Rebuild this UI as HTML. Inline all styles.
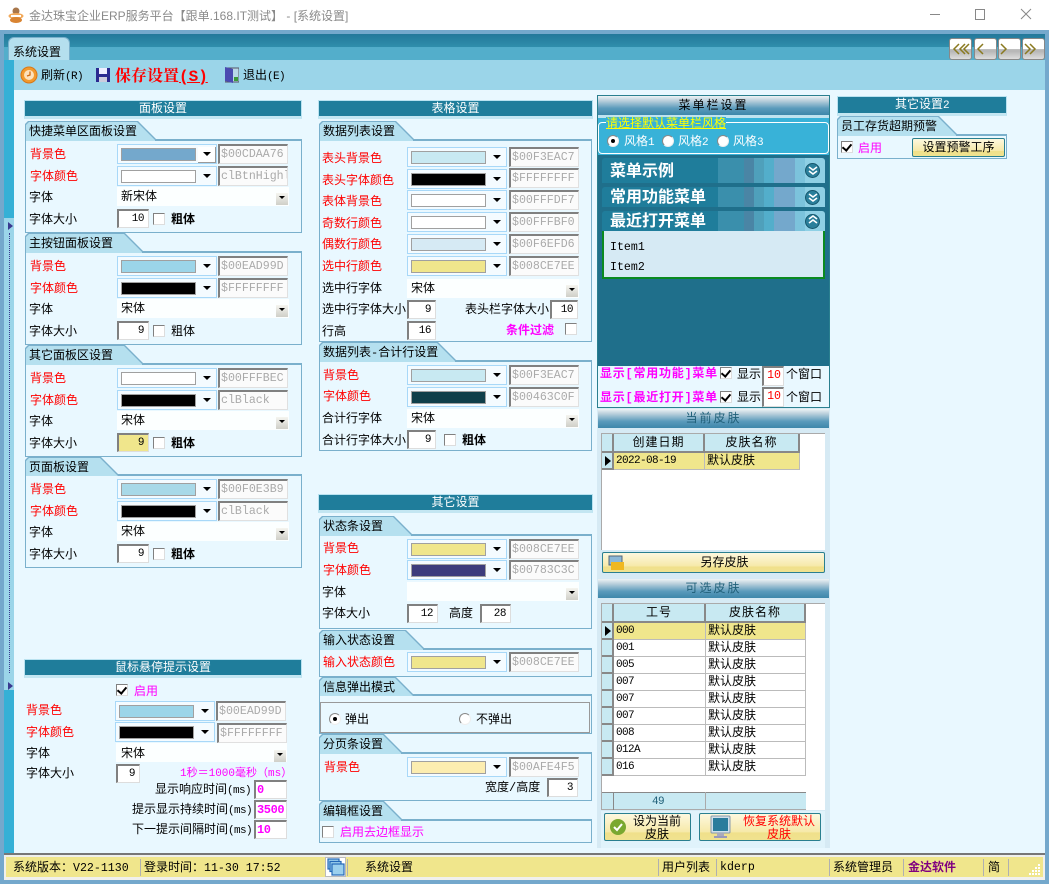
<!DOCTYPE html>
<html><head><meta charset="utf-8"><title>金达珠宝企业ERP服务平台</title>
<style>
html,body{margin:0;padding:0}
body{width:1049px;height:884px;overflow:hidden;position:relative;background:#e9f8ff;font:12px/14px "Liberation Mono","WenQuanYi Zen Hei","Noto Sans CJK SC",monospace;color:#000}
div,span,i,b{position:absolute;box-sizing:border-box}
.t{white-space:nowrap;font-style:normal;font-weight:normal;margin-top:1px}
.t.a{font-size:11px;letter-spacing:-.6px}
.t.bd{font-weight:bold}
.x{position:static;font-size:11px;letter-spacing:-.6px}
.y{position:static;font-size:11.6px}
.r{color:#f00}.m{color:#f0f}.bd{font-weight:bold}
.w{left:0;width:0;height:0}
.h{height:19px;background:#1f7d9b;border:1px solid #b9e2f0;border-bottom:3px solid #c3e6f2;color:#fff;text-align:center;line-height:17px}
.tab{height:20px;z-index:1;background:#7ab0cc;clip-path:polygon(0 3px,3px 0,calc(100% - 18px) 0,100% 18px,100% 100%,0 100%)}
.tab::before{content:"";position:absolute;left:1px;top:1px;right:1px;bottom:0;background:#b5e0ef;clip-path:polygon(0 3px,3px 0,calc(100% - 18px) 0,100% 18px,100% 100%,0 100%)}
.tab span{left:4px;top:4px;white-space:nowrap}
.g{border:1px solid #7ab0cc;border-top:2px solid #7ab0cc}
.c{width:100px;height:20px;border:1px solid #a8d8f8;background:#f4fbff}
.c i{left:3px;top:3px;width:75px;height:13px;border:1px solid #a0a0a0}
.c b{left:85px;top:7px;width:0;height:0;border-left:4px solid transparent;border-right:4px solid transparent;border-top:4px solid #000}
.c u{position:absolute;left:80px;top:2px;width:17px;height:15px;border-right:1px solid #999;border-bottom:1px solid #999;background:#fff}
.e{width:70px;height:20px;border:1px solid #e0e0e0;border-top:2px solid #808080;border-left:2px solid #808080;background:#fbfbfb;color:#aaa;font-size:11.6px;line-height:17px;padding-left:1px;white-space:nowrap;overflow:hidden}
.s{height:19px;border:1px solid #ddd;border-top:2px solid #808080;border-left:2px solid #808080;background:#fff;text-align:right;padding-right:4px;line-height:16px;font-size:11px;letter-spacing:-.5px}
.k{width:12px;height:12px;border:1px solid #ddd;border-top:1px solid #808080;border-left:1px solid #808080;background:#fff}
.k.on::after{content:"";position:absolute;left:2px;top:0;width:4px;height:7px;border-right:2px solid #000;border-bottom:2px solid #000;transform:rotate(40deg)}
.sel{height:19px;background:#fcffff}
.ab{width:12px;height:12px;background:linear-gradient(#f5f5f0,#cfcfc8)}
.ab::after{content:"";position:absolute;left:3px;top:3px;border-left:3px solid transparent;border-right:3px solid transparent;border-top:3px solid #000}
.gh{height:19px;background:linear-gradient(#eef3f5,#b9cfdc 25%,#5a9abb 65%,#3e87aa);text-align:center;line-height:20px;color:#1f5f78;letter-spacing:2px}
.rd{width:12px;height:12px;border-radius:50%;background:#fff;border:1px solid #888;border-right-color:#eee;border-bottom-color:#eee}
.rd.on::after{content:"";position:absolute;left:3px;top:3px;width:4px;height:4px;border-radius:50%;background:#000}
.bar{left:602px;width:223px;background:linear-gradient(90deg,#1f7d9b 0,#1f7d9b 116px,#3a8fac 116px,#3a8fac 142px,#4a85a5 142px,#4a85a5 152px,#4fa0bb 152px,#4fa0bb 162px,#53aecb 162px,#53aecb 172px,#74a8cc 172px,#74a8cc 193px,#7cc3dc 193px,#7cc3dc 203px,#8fd0e5 203px);border-radius:3px 3px 0 0;color:#fff;font-size:16px;font-weight:bold;padding-left:8px;white-space:nowrap}
.o{left:203px;width:15px;height:15px;border-radius:50%;background:#2a7f9b;border:1px solid #15566c}
.btn{background:linear-gradient(#fdf8df,#f6e9a8 70%,#f0e08a 71%,#f0e28f);border:1px solid #2a7f8f;border-radius:2px;text-align:center}
.cell{height:17px;border-right:1px solid #bbb;border-bottom:1px solid #bbb;white-space:nowrap;padding-left:2px;line-height:16px}
.num{font-size:11px;letter-spacing:-.6px}
.hc{background:#c8e9f2;border-right:2px solid #888;border-bottom:2px solid #888;text-align:center;height:19px;line-height:18px;letter-spacing:1px}
.sp{top:859px;width:1px;height:17px;background:#b0b0b0}
.n{top:38px;width:23px;height:22px;border:1px solid #888;border-radius:3px;background:linear-gradient(#fff 50%,#c2c2c2 50%,#b5b5b5 60%,#ddd)}
</style></head><body>
<!-- title bar -->
<div style="left:0;top:0;width:1049px;height:30px;background:#fff"></div>
<svg style="position:absolute;left:7px;top:7px" width="18" height="17"><ellipse cx="9" cy="4" rx="3.500" ry="3.500" fill="#a8764a"/><ellipse cx="9" cy="9" rx="7.500" ry="3" fill="#f2aa5c"/><ellipse cx="9" cy="13" rx="6" ry="3" fill="#d98432"/><rect x="4" y="8" width="10" height="2" fill="#fff"/></svg>
<span class="t" style="left:29px;top:8px;color:#8a8a8a;font-family:'Liberation Sans','Noto Sans CJK SC',sans-serif">金达珠宝企业ERP服务平台【跟单.168.IT测试】 - [系统设置]</span>
<svg style="position:absolute;left:925px;top:5px" width="115" height="20" fill="none" stroke="#888" stroke-width="1"><path d="M5 9.5h10M50.5 4.5h9v10h-9zM96 4l10 10M106 4l-10 10"/></svg>
<!-- frame -->
<div style="left:0;top:30px;width:4px;height:854px;background:#74a8cc"></div>
<div style="left:1045px;top:30px;width:4px;height:854px;background:#74a8cc"></div>
<div style="left:0;top:880px;width:1049px;height:4px;background:#74a8cc"></div>
<div style="left:0;top:30px;width:1049px;height:4px;background:#74a8cc"></div>
<div style="left:4px;top:34px;width:1041px;height:26px;background:linear-gradient(#23789a,#2f8eac 50%,#53aecb 51%,#53aecb)"></div>
<div style="left:8px;top:37px;width:62px;height:24px;background:#b5dfee;border:1px solid #7ab0cc;border-bottom:0;border-radius:6px 6px 0 0"></div>
<span class="t" style="left:13px;top:45px">系统设置</span>
<div class="n" style="left:949px"></div><div class="n" style="left:974px"></div><div class="n" style="left:998px"></div><div class="n" style="left:1022px"></div>
<svg style="position:absolute;left:949px;top:38px" width="96" height="22" fill="none" stroke="#8a7a20" stroke-width="1.5"><path d="M10 6l-5 5 5 5M16 6l-5 5 5 5M20 6l-5 5 5 5M34 6l-5 5 5 5M52 6l5 5-5 5M76 6l5 5-5 5M81 6l5 5-5 5"/></svg>
<!-- rail & toolbar -->
<div style="left:4px;top:60px;width:10px;height:793px;background:#35b0d6"></div>
<div style="left:4px;top:218px;width:10px;height:472px;background:#9bd5e9"></div>
<div style="left:8px;top:222px;border-left:5px solid #3a3a90;border-top:4px solid transparent;border-bottom:4px solid transparent"></div>
<div style="left:8px;top:682px;border-left:5px solid #3a3a90;border-top:4px solid transparent;border-bottom:4px solid transparent"></div>
<div style="left:9px;top:233px;height:440px;border-left:1px dotted #3a3a90"></div>
<div style="left:14px;top:60px;width:1031px;height:30px;background:#9bd5e9"></div>
<svg style="position:absolute;left:20px;top:66px" width="18" height="18"><circle cx="9" cy="9" r="8" fill="#f29a2e" stroke="#d87818"/><circle cx="9" cy="9" r="5" fill="#fde2bc"/><path d="M10 5.500v3.500l-3 1" stroke="#d06a10" stroke-width="1.300" fill="none"/></svg>
<span class="t" style="left:41px;top:68px">刷新<span class="x">(R)</span></span>
<svg style="position:absolute;left:96px;top:68px" width="14" height="14"><rect width="14" height="14" fill="#2a2a90"/><rect x="3" y="0" width="8" height="6" fill="#eef"/><rect x="3" y="9" width="8" height="5" fill="#ccd"/></svg>
<span class="t r bd" style="left:115px;top:67px;font-size:16px;line-height:18px;font-family:'Liberation Mono','Noto Serif CJK SC',serif">保存设置<span style="position:static;text-decoration:underline">(S)</span></span>
<svg style="position:absolute;left:225px;top:67px" width="14" height="16"><rect x="0" y="1" width="14" height="14" fill="#b8d8e8" stroke="#556"/><path d="M0 0l8 2v14l-8-2z" fill="#4a4ab0"/><rect x="9" y="10" width="4" height="4" fill="#3a9a3a"/></svg>
<span class="t" style="left:243px;top:68px">退出<span class="x">(E)</span></span>

<!-- COLUMN 1 -->
<div class="h" style="left:24px;top:100px;width:278px">面板设置</div>
<div class="tab" style="left:25px;top:121px;width:131px"><span>快捷菜单区面板设置</span></div>
<div class="g" style="left:25px;top:139px;width:277px;height:94px"></div>
<span class="t r" style="left:30px;top:147px">背景色</span>
<span class="t r" style="left:30px;top:169px">字体颜色</span>
<span class="t" style="left:29px;top:190px">字体</span>
<span class="t" style="left:29px;top:212px">字体大小</span>
<div class="c" style="left:117px;top:144px"><i style="background:#74a8cc"></i><u></u><b></b></div>
<div class="c" style="left:117px;top:166px"><i style="background:#fff"></i><b></b></div>
<div class="e" style="left:218px;top:144px">$00CDAA76</div>
<div class="e" style="left:218px;top:166px">clBtnHighl</div>
<div class="sel" style="left:117px;top:187px;width:172px"></div>
<span class="t" style="left:121px;top:189px">新宋体</span><div class="ab" style="left:276px;top:193px"></div>
<div class="s" style="left:117px;top:209px;width:32px">10</div><div class="k" style="left:153px;top:213px"></div>
<span class="t bd" style="left:171px;top:212px">粗体</span>

<div class="w" style="top:112px">
<div class="tab" style="left:25px;top:121px;width:118px"><span>主按钮面板设置</span></div>
<div class="g" style="left:25px;top:139px;width:277px;height:94px"></div>
<span class="t r" style="left:30px;top:147px">背景色</span>
<span class="t r" style="left:30px;top:169px">字体颜色</span>
<span class="t" style="left:29px;top:190px">字体</span>
<span class="t" style="left:29px;top:212px">字体大小</span>
<div class="c" style="left:117px;top:144px"><i style="background:#9bd5e9"></i><b></b></div>
<div class="c" style="left:117px;top:166px"><i style="background:#000"></i><b></b></div>
<div class="e" style="left:218px;top:144px">$00EAD99D</div>
<div class="e" style="left:218px;top:166px">$FFFFFFFF</div>
<div class="sel" style="left:117px;top:187px;width:172px"></div>
<span class="t" style="left:121px;top:189px">宋体</span><div class="ab" style="left:276px;top:193px"></div>
<div class="s" style="left:117px;top:209px;width:32px">9</div><div class="k" style="left:153px;top:213px"></div>
<span class="t" style="left:171px;top:212px">粗体</span>
</div>

<div class="w" style="top:224px">
<div class="tab" style="left:25px;top:121px;width:118px"><span>其它面板区设置</span></div>
<div class="g" style="left:25px;top:139px;width:277px;height:94px"></div>
<span class="t r" style="left:30px;top:147px">背景色</span>
<span class="t r" style="left:30px;top:169px">字体颜色</span>
<span class="t" style="left:29px;top:190px">字体</span>
<span class="t" style="left:29px;top:212px">字体大小</span>
<div class="c" style="left:117px;top:144px"><i style="background:#fff"></i><b></b></div>
<div class="c" style="left:117px;top:166px"><i style="background:#000"></i><b></b></div>
<div class="e" style="left:218px;top:144px">$00FFFBEC</div>
<div class="e" style="left:218px;top:166px">clBlack</div>
<div class="sel" style="left:117px;top:187px;width:172px"></div>
<span class="t" style="left:121px;top:189px">宋体</span><div class="ab" style="left:276px;top:193px"></div>
<div class="s" style="left:117px;top:209px;width:32px;background:#f0e68c">9</div><div class="k" style="left:153px;top:213px"></div>
<span class="t bd" style="left:171px;top:212px">粗体</span>
</div>

<div class="w" style="top:335px">
<div class="tab" style="left:25px;top:122px;width:94px;height:19px"><span>页面板设置</span></div>
<div class="g" style="left:25px;top:139px;width:277px;height:94px"></div>
<span class="t r" style="left:30px;top:147px">背景色</span>
<span class="t r" style="left:30px;top:169px">字体颜色</span>
<span class="t" style="left:29px;top:190px">字体</span>
<span class="t" style="left:29px;top:212px">字体大小</span>
<div class="c" style="left:117px;top:144px"><i style="background:#a8d9e8"></i><b></b></div>
<div class="c" style="left:117px;top:166px"><i style="background:#000"></i><b></b></div>
<div class="e" style="left:218px;top:144px">$00F0E3B9</div>
<div class="e" style="left:218px;top:166px">clBlack</div>
<div class="sel" style="left:117px;top:187px;width:172px"></div>
<span class="t" style="left:121px;top:189px">宋体</span><div class="ab" style="left:276px;top:193px"></div>
<div class="s" style="left:117px;top:209px;width:32px">9</div><div class="k" style="left:153px;top:213px"></div>
<span class="t bd" style="left:171px;top:212px">粗体</span>
</div>

<div class="h" style="left:24px;top:659px;width:278px">鼠标悬停提示设置</div>
<div class="k on" style="left:116px;top:684px"></div><span class="t m" style="left:134px;top:684px">启用</span>
<span class="t r" style="left:26px;top:703px">背景色</span>
<span class="t r" style="left:26px;top:725px">字体颜色</span>
<span class="t" style="left:26px;top:746px">字体</span>
<span class="t" style="left:26px;top:766px">字体大小</span>
<div class="c" style="left:115px;top:701px;width:100px"><i style="background:#9bd5e9"></i><b></b></div>
<div class="c" style="left:115px;top:722px;width:100px"><i style="background:#000"></i><b></b></div>
<div class="e" style="left:216px;top:701px">$00EAD99D</div>
<div class="e" style="left:217px;top:723px">$FFFFFFFF</div>
<div class="sel" style="left:116px;top:743px;width:171px"></div>
<span class="t" style="left:121px;top:746px">宋体</span><div class="ab" style="left:274px;top:750px"></div>
<div class="s" style="left:116px;top:764px;width:24px">9</div>
<span class="t m" style="left:180px;top:766px;font-size:11px">1秒＝1000毫秒（ms）</span>
<span class="t" style="left:155px;top:782px">显示响应时间<span class="x">(ms)</span></span>
<span class="t" style="left:132px;top:802px">提示显示持续时间<span class="x">(ms)</span></span>
<span class="t" style="left:132px;top:822px">下一提示间隔时间<span class="x">(ms)</span></span>
<div class="s m bd" style="left:254px;top:780px;width:33px;text-align:left;padding-left:1px;font-size:12px;letter-spacing:-.4px">0</div>
<div class="s m bd" style="left:254px;top:800px;width:33px;text-align:left;padding-left:1px;font-size:12px;letter-spacing:-.4px">3500</div>
<div class="s m bd" style="left:254px;top:820px;width:33px;text-align:left;padding-left:1px;font-size:12px;letter-spacing:-.4px">10</div>

<!-- COLUMN 2 -->
<div class="h" style="left:318px;top:100px;width:275px">表格设置</div>
<div class="tab" style="left:319px;top:121px;width:95px"><span>数据列表设置</span></div>
<div class="g" style="left:319px;top:139px;width:273px;height:203px"></div>
<span class="t r" style="left:322px;top:151px">表头背景色</span>
<span class="t r" style="left:322px;top:173px">表头字体颜色</span>
<span class="t r" style="left:322px;top:194px">表体背景色</span>
<span class="t r" style="left:322px;top:216px">奇数行颜色</span>
<span class="t r" style="left:322px;top:237px">偶数行颜色</span>
<span class="t r" style="left:322px;top:259px">选中行颜色</span>
<span class="t" style="left:322px;top:281px">选中行字体</span>
<span class="t" style="left:322px;top:302px">选中行字体大小</span>
<span class="t" style="left:322px;top:324px">行高</span>
<div class="c" style="left:407px;top:147px"><i style="background:#c8e9f2"></i><b></b></div>
<div class="c" style="left:407px;top:169px"><i style="background:#000"></i><b></b></div>
<div class="c" style="left:407px;top:190px"><i style="background:#fff"></i><b></b></div>
<div class="c" style="left:407px;top:212px"><i style="background:#fff"></i><b></b></div>
<div class="c" style="left:407px;top:234px"><i style="background:#d6eaf4"></i><b></b></div>
<div class="c" style="left:407px;top:256px"><i style="background:#f0e68c"></i><b></b></div>
<div class="e" style="left:509px;top:147px">$00F3EAC7</div>
<div class="e" style="left:509px;top:168px">$FFFFFFFF</div>
<div class="e" style="left:509px;top:190px">$00FFFDF7</div>
<div class="e" style="left:509px;top:212px">$00FFFBF0</div>
<div class="e" style="left:509px;top:234px">$00F6EFD6</div>
<div class="e" style="left:509px;top:256px">$008CE7EE</div>
<div class="sel" style="left:407px;top:279px;width:172px"></div>
<span class="t" style="left:411px;top:281px">宋体</span><div class="ab" style="left:566px;top:285px"></div>
<div class="s" style="left:407px;top:300px;width:29px">9</div>
<span class="t" style="left:465px;top:302px">表头栏字体大小</span>
<div class="s" style="left:550px;top:300px;width:28px">10</div>
<div class="s" style="left:407px;top:321px;width:29px">16</div>
<span class="t m bd" style="left:506px;top:323px">条件过滤</span>
<div class="k" style="left:565px;top:323px"></div>

<div class="tab" style="left:319px;top:342px;width:137px"><span>数据列表-合计行设置</span></div>
<div class="g" style="left:319px;top:360px;width:273px;height:91px"></div>
<span class="t r" style="left:323px;top:368px">背景色</span>
<span class="t r" style="left:323px;top:389px">字体颜色</span>
<span class="t" style="left:322px;top:411px">合计行字体</span>
<span class="t" style="left:322px;top:433px">合计行字体大小</span>
<div class="c" style="left:407px;top:365px"><i style="background:#c8e9f2"></i><b></b></div>
<div class="c" style="left:407px;top:387px"><i style="background:#0f3f4a"></i><b></b></div>
<div class="e" style="left:509px;top:365px">$00F3EAC7</div>
<div class="e" style="left:509px;top:387px">$00463C0F</div>
<div class="sel" style="left:407px;top:409px;width:172px"></div>
<span class="t" style="left:411px;top:411px">宋体</span><div class="ab" style="left:566px;top:415px"></div>
<div class="s" style="left:407px;top:430px;width:29px">9</div><div class="k" style="left:444px;top:434px"></div>
<span class="t bd" style="left:462px;top:433px">粗体</span>

<div class="h" style="left:318px;top:494px;width:275px">其它设置</div>
<div class="tab" style="left:319px;top:516px;width:93px"><span>状态条设置</span></div>
<div class="g" style="left:319px;top:534px;width:273px;height:95px"></div>
<span class="t r" style="left:323px;top:541px">背景色</span>
<span class="t r" style="left:323px;top:563px">字体颜色</span>
<span class="t" style="left:322px;top:585px">字体</span>
<span class="t" style="left:322px;top:606px">字体大小</span>
<div class="c" style="left:407px;top:539px"><i style="background:#f0e68c"></i><b></b></div>
<div class="c" style="left:407px;top:560px"><i style="background:#3c3c7c"></i><b></b></div>
<div class="e" style="left:509px;top:539px">$008CE7EE</div>
<div class="e" style="left:509px;top:560px">$00783C3C</div>
<div class="sel" style="left:407px;top:582px;width:172px"></div><div class="ab" style="left:566px;top:588px"></div>
<div class="s" style="left:407px;top:604px;width:31px">12</div>
<span class="t" style="left:449px;top:606px">高度</span>
<div class="s" style="left:480px;top:604px;width:31px">28</div>

<div class="tab" style="left:319px;top:630px;width:105px"><span>输入状态设置</span></div>
<div class="g" style="left:319px;top:648px;width:273px;height:29px"></div>
<span class="t r" style="left:323px;top:655px">输入状态颜色</span>
<div class="c" style="left:407px;top:652px"><i style="background:#f0e68c"></i><b></b></div>
<div class="e" style="left:509px;top:652px">$008CE7EE</div>

<div class="tab" style="left:319px;top:677px;width:95px;height:19px"><span>信息弹出模式</span></div>
<div class="g" style="left:319px;top:694px;width:273px;height:40px"></div>
<div style="left:320px;top:702px;width:270px;height:31px;border:1px solid #999"></div>
<div class="rd on" style="left:329px;top:713px"></div><span class="t" style="left:345px;top:712px">弹出</span>
<div class="rd" style="left:459px;top:713px"></div><span class="t" style="left:476px;top:712px">不弹出</span>

<div class="tab" style="left:319px;top:734px;width:83px"><span>分页条设置</span></div>
<div class="g" style="left:319px;top:752px;width:273px;height:49px"></div>
<span class="t r" style="left:324px;top:760px">背景色</span>
<div class="c" style="left:407px;top:757px"><i style="background:#fcedb0"></i><b></b></div>
<div class="e" style="left:509px;top:757px">$00AFE4F5</div>
<span class="t" style="left:485px;top:780px">宽度/高度</span>
<div class="s" style="left:547px;top:778px;width:31px">3</div>

<div class="tab" style="left:319px;top:801px;width:83px"><span>编辑框设置</span></div>
<div class="g" style="left:319px;top:819px;width:273px;height:24px"></div>
<div class="k" style="left:322px;top:826px"></div>
<span class="t m" style="left:340px;top:825px">启用去边框显示</span>

<!-- COLUMN 3 -->
<div style="left:597px;top:95px;width:233px;height:313px;border:1px solid #2a7f8f;background:#1f6f8b"></div>
<div class="gh" style="left:598px;top:96px;width:231px;color:#000">菜单栏设置</div>
<div style="left:598px;top:115px;width:231px;height:3px;background:#bfe3f0"></div>
<div style="left:598px;top:118px;width:231px;height:37px;background:#38b2d8"></div>
<div style="left:598px;top:122px;width:231px;height:32px;border:1px solid #fff;border-radius:4px"></div>
<span class="t" style="left:606px;top:116px;background:#38b2d8;color:#ff0;text-decoration:underline">请选择默认菜单栏风格</span>
<div class="rd on" style="left:607px;top:135px"></div><span class="t" style="left:624px;top:134px;color:#fff">风格<span class="x">1</span></span>
<div class="rd" style="left:662px;top:135px"></div><span class="t" style="left:678px;top:134px;color:#fff">风格<span class="x">2</span></span>
<div class="rd" style="left:717px;top:135px"></div><span class="t" style="left:733px;top:134px;color:#fff">风格<span class="x">3</span></span>
<div class="bar" style="top:158px;height:25px;line-height:28px">菜单示例<div class="o" style="top:5px"></div></div>
<div class="bar" style="top:187px;height:20px;line-height:22px">常用功能菜单<div class="o" style="top:3px"></div></div>
<div class="bar" style="top:211px;height:20px;line-height:23px">最近打开菜单<div class="o" style="top:3px"></div></div>
<svg style="position:absolute;left:805px;top:163px" width="16" height="70" fill="none" stroke="#fff" stroke-width="1.6"><path d="M4 4l4 3 4-3M4 8l4 3 4-3M4 31l4 3 4-3M4 35l4 3 4-3M4 60l4-3 4 3M4 56l4-3 4 3"/></svg>
<div style="left:602px;top:231px;width:223px;height:48px;background:#d6eaf4;border:2px solid #0a8a20;border-top:0"></div>
<span class="t" style="left:610px;top:240px;font-size:11.6px">Item1</span>
<span class="t" style="left:610px;top:260px;font-size:11.6px">Item2</span>
<div style="left:598px;top:366px;width:231px;height:41px;background:#e9f8ff"></div>
<span class="t m bd" style="left:600px;top:366px;letter-spacing:.75px">显示[常用功能]菜单</span>
<span class="t m bd" style="left:600px;top:390px;letter-spacing:.75px">显示[最近打开]菜单</span>
<div class="k on" style="left:720px;top:367px"></div><div class="k on" style="left:720px;top:391px"></div>
<span class="t" style="left:737px;top:367px">显示</span><span class="t" style="left:737px;top:390px">显示</span>
<div class="s r" style="left:762px;top:366px;width:22px;padding-right:2px;height:20px;font-size:11.6px;letter-spacing:0">10</div>
<div class="s r" style="left:762px;top:387px;width:22px;padding-right:2px;height:20px;font-size:11.6px;letter-spacing:0">10</div>
<span class="t" style="left:786px;top:367px">个窗口</span><span class="t" style="left:786px;top:390px">个窗口</span>

<div style="left:597px;top:408px;width:233px;height:440px;background:#d6eaf4"></div>
<div class="gh" style="left:598px;top:409px;width:231px">当前皮肤</div>
<div style="left:601px;top:433px;width:224px;height:117px;background:#fff;border-top:1px solid #aaa;border-left:1px solid #aaa"></div>
<div class="hc" style="left:602px;top:434px;width:12px"></div>
<div class="hc" style="left:614px;top:434px;width:91px">创建日期</div>
<div class="hc" style="left:705px;top:434px;width:95px">皮肤名称</div>
<div class="hc" style="left:602px;top:453px;width:12px;height:17px"></div>
<div style="left:605px;top:456px;border-left:6px solid #000;border-top:5px solid transparent;border-bottom:5px solid transparent"></div>
<div class="cell num" style="left:614px;top:453px;width:91px;background:#f0e68c">2022-08-19</div>
<div class="cell" style="left:705px;top:453px;width:95px;background:#f0e68c">默认皮肤</div>
<div class="btn" style="left:602px;top:552px;width:223px;height:21px;line-height:20px;padding-left:22px">另存皮肤</div>
<svg style="position:absolute;left:608px;top:555px" width="17" height="16"><rect x="1" y="1" width="13" height="9" fill="#8bb8d8" stroke="#567"/><rect x="3" y="7" width="13" height="8" fill="#f0b820"/></svg>

<div class="gh" style="left:598px;top:579px;width:231px">可选皮肤</div>
<div style="left:601px;top:603px;width:224px;height:207px;background:#fff;border-top:1px solid #aaa;border-left:1px solid #aaa"></div>
<div class="hc" style="left:602px;top:604px;width:12px"></div>
<div class="hc" style="left:614px;top:604px;width:92px">工号</div>
<div class="hc" style="left:706px;top:604px;width:100px">皮肤名称</div>
<div style="left:602px;top:623px;width:12px;height:153px;background:repeating-linear-gradient(#c8e9f2 0,#c8e9f2 15px,#888 15px,#888 17px);border-right:2px solid #888"></div>
<div style="left:605px;top:626px;border-left:6px solid #000;border-top:5px solid transparent;border-bottom:5px solid transparent"></div>
<div class="cell num" style="left:614px;top:623px;width:92px;background:#f0e68c">000</div><div class="cell" style="left:706px;top:623px;width:100px;background:#f0e68c">默认皮肤</div>
<div class="cell num" style="left:614px;top:640px;width:92px">001</div><div class="cell" style="left:706px;top:640px;width:100px">默认皮肤</div>
<div class="cell num" style="left:614px;top:657px;width:92px">005</div><div class="cell" style="left:706px;top:657px;width:100px">默认皮肤</div>
<div class="cell num" style="left:614px;top:674px;width:92px">007</div><div class="cell" style="left:706px;top:674px;width:100px">默认皮肤</div>
<div class="cell num" style="left:614px;top:691px;width:92px">007</div><div class="cell" style="left:706px;top:691px;width:100px">默认皮肤</div>
<div class="cell num" style="left:614px;top:708px;width:92px">007</div><div class="cell" style="left:706px;top:708px;width:100px">默认皮肤</div>
<div class="cell num" style="left:614px;top:725px;width:92px">008</div><div class="cell" style="left:706px;top:725px;width:100px">默认皮肤</div>
<div class="cell num" style="left:614px;top:742px;width:92px">012A</div><div class="cell" style="left:706px;top:742px;width:100px">默认皮肤</div>
<div class="cell num" style="left:614px;top:759px;width:92px">016</div><div class="cell" style="left:706px;top:759px;width:100px">默认皮肤</div>
<div style="left:602px;top:792px;width:204px;height:18px;background:#c8e9f2;border-top:1px solid #888;border-bottom:1px solid #aaa"></div>
<div style="left:613px;top:792px;width:1px;height:18px;background:#888"></div><div style="left:705px;top:792px;width:1px;height:18px;background:#aaa"></div>
<span class="t a" style="left:652px;top:794px;color:#1f5f78">49</span>
<div style="left:601px;top:811px;width:224px;height:37px;background:#e0f3fb"></div>
<div class="btn" style="left:604px;top:813px;width:87px;height:28px;line-height:13px;padding:2px 0 0 19px">设为当前<br>皮肤</div>
<svg style="position:absolute;left:609px;top:818px" width="18" height="18"><circle cx="9" cy="9" r="8" fill="#7aa830"/><path d="M5 9l3 3 5-6" stroke="#fff" stroke-width="2" fill="none"/></svg>
<div class="btn r" style="left:699px;top:813px;width:122px;height:28px;line-height:13px;padding:2px 0 0 38px">恢复系统默认<br>皮肤</div>
<svg style="position:absolute;left:709px;top:815px" width="24" height="25"><rect x="2" y="1" width="19" height="17" rx="1" fill="#d0e0ea" stroke="#89a"/><rect x="4" y="3" width="15" height="13" fill="#2a7c9c"/><path d="M8 18h7v3H8z" fill="#aab"/><rect x="5" y="21" width="13" height="2" fill="#99b"/></svg>

<!-- right -->
<div class="h" style="left:837px;top:96px;width:170px;height:20px;line-height:17px">其它设置<span class="x">2</span></div>
<div class="tab" style="left:837px;top:116px;width:120px"><span>员工存货超期预警</span></div>
<div class="g" style="left:837px;top:134px;width:170px;height:25px"></div>
<div class="k on" style="left:841px;top:141px"></div><span class="t m" style="left:858px;top:141px">启用</span>
<div class="btn" style="left:912px;top:138px;width:93px;height:19px;line-height:18px">设置预警工序</div>

<!-- status -->
<div style="left:4px;top:853px;width:1041px;height:2px;background:#777"></div>
<div style="left:4px;top:855px;width:1041px;height:25px;background:#f0f0ec"></div>
<div style="left:6px;top:857px;width:1037px;height:20px;background:#f0e68c"></div>
<span class="t" style="left:13px;top:860px">系统版本：<span class="y">V22-1130</span></span>
<div class="sp" style="left:140px"></div>
<span class="t" style="left:144px;top:860px">登录时间：<span class="y">11-30 17:52</span></span>
<div style="left:325px;top:857px;width:21px;height:20px;background:#fff;border:1px solid #bbb"></div>
<svg style="position:absolute;left:327px;top:858px" width="18" height="18" fill="#9cd0ee" stroke="#2468b8" stroke-width="1.2"><rect x="1" y="1" width="11" height="10"/><rect x="3" y="3.500" width="11" height="10"/><rect x="5" y="6" width="12" height="11"/></svg>
<div class="sp" style="left:347px"></div>
<span class="t" style="left:365px;top:860px">系统设置</span>
<div class="sp" style="left:658px"></div><span class="t" style="left:662px;top:860px">用户列表</span>
<div class="sp" style="left:716px"></div><span class="t" style="left:720px;top:860px;font-size:11.6px">kderp</span>
<div class="sp" style="left:829px"></div><span class="t" style="left:833px;top:860px">系统管理员</span>
<div class="sp" style="left:903px"></div><span class="t bd" style="left:908px;top:860px;color:#800080">金达软件</span>
<div class="sp" style="left:983px"></div><span class="t" style="left:988px;top:860px">简</span>
<div class="sp" style="left:1008px"></div>
<svg style="position:absolute;left:1028px;top:862px" width="14" height="14" fill="#fff"><path d="M10 2h2v2h-2zM7 5h2v2H7zM10 5h2v2h-2zM4 8h2v2H4zM7 8h2v2H7zM10 8h2v2h-2zM1 11h2v2H1zM4 11h2v2H4zM7 11h2v2H7zM10 11h2v2h-2z"/></svg>
</body></html>
